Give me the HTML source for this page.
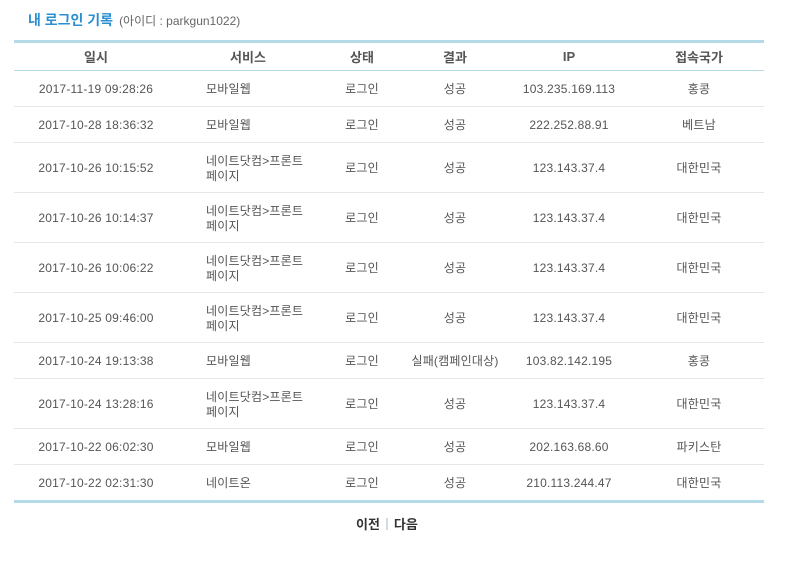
<!DOCTYPE html>
<html><head><meta charset="utf-8"><style>
body{margin:0;background:#fff;font-family:"Liberation Sans","Noto Sans CJK KR","NanumGothic",sans-serif;color:#555;font-size:12px;}
h1{position:absolute;left:28px;top:10px;margin:0;font-size:14px;font-weight:bold;color:#2a8fd0;}
h1 span{font-size:12px;font-weight:normal;color:#666;margin-left:6px;}
table{position:absolute;left:14px;top:40px;width:750px;border-collapse:collapse;table-layout:fixed;border-top:3px solid #b6dbe8;border-bottom:3px solid #b6dbe8;}
th{height:27px;font-size:13px;font-weight:bold;color:#555;border-bottom:1px solid #b6dbe8;padding:0;}
td{text-align:center;border-bottom:1px solid #e6e6e6;padding:2px 0 0 0;line-height:15px;letter-spacing:0.2px}
tr.s td{height:33px}
tr.t td{height:47px}
tr:last-child td{border-bottom:none}
td.v{text-align:left;padding-left:28px}
.nav{position:absolute;left:356px;top:514px;font-weight:bold;font-size:13px;color:#333}
.nav i{display:inline-block;width:2px;height:12px;background:#cfdde6;margin:0 6px;vertical-align:-1px}
</style></head><body>
<h1>내 로그인 기록<span>(아이디 : parkgun1022)</span></h1>
<table>
<colgroup><col style="width:164px"><col style="width:140px"><col style="width:88px"><col style="width:98px"><col style="width:130px"><col style="width:130px"></colgroup>
<tr><th>일시</th><th>서비스</th><th>상태</th><th>결과</th><th>IP</th><th>접속국가</th></tr>
<tr class="s"><td>2017-11-19 09:28:26</td><td class="v">모바일웹</td><td>로그인</td><td>성공</td><td>103.235.169.113</td><td>홍콩</td></tr>
<tr class="s"><td>2017-10-28 18:36:32</td><td class="v">모바일웹</td><td>로그인</td><td>성공</td><td>222.252.88.91</td><td>베트남</td></tr>
<tr class="t"><td>2017-10-26 10:15:52</td><td class="v">네이트닷컴&gt;프론트<br>페이지</td><td>로그인</td><td>성공</td><td>123.143.37.4</td><td>대한민국</td></tr>
<tr class="t"><td>2017-10-26 10:14:37</td><td class="v">네이트닷컴&gt;프론트<br>페이지</td><td>로그인</td><td>성공</td><td>123.143.37.4</td><td>대한민국</td></tr>
<tr class="t"><td>2017-10-26 10:06:22</td><td class="v">네이트닷컴&gt;프론트<br>페이지</td><td>로그인</td><td>성공</td><td>123.143.37.4</td><td>대한민국</td></tr>
<tr class="t"><td>2017-10-25 09:46:00</td><td class="v">네이트닷컴&gt;프론트<br>페이지</td><td>로그인</td><td>성공</td><td>123.143.37.4</td><td>대한민국</td></tr>
<tr class="s"><td>2017-10-24 19:13:38</td><td class="v">모바일웹</td><td>로그인</td><td>실패(캠페인대상)</td><td>103.82.142.195</td><td>홍콩</td></tr>
<tr class="t"><td>2017-10-24 13:28:16</td><td class="v">네이트닷컴&gt;프론트<br>페이지</td><td>로그인</td><td>성공</td><td>123.143.37.4</td><td>대한민국</td></tr>
<tr class="s"><td>2017-10-22 06:02:30</td><td class="v">모바일웹</td><td>로그인</td><td>성공</td><td>202.163.68.60</td><td>파키스탄</td></tr>
<tr class="s"><td>2017-10-22 02:31:30</td><td class="v">네이트온</td><td>로그인</td><td>성공</td><td>210.113.244.47</td><td>대한민국</td></tr>
</table>
<div class="nav">이전<i></i>다음</div>
</body></html>
